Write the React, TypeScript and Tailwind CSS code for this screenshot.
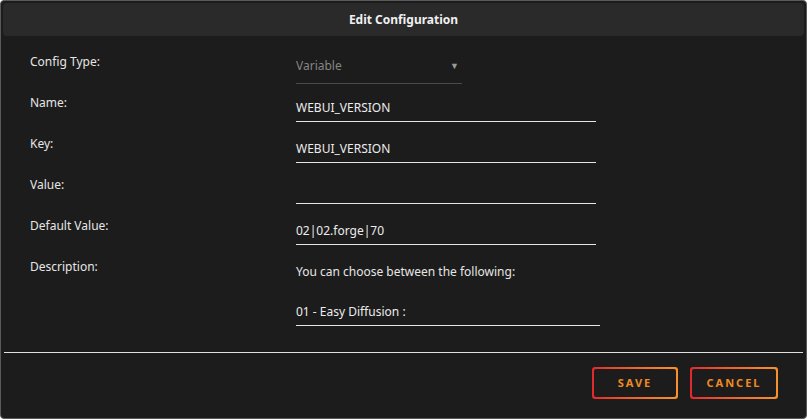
import React from "react";

const font = { fontFamily: "'Noto Sans', 'Open Sans', sans-serif" };

function Row({ label, children, h = "h-[41px]" }: { label: string; children: React.ReactNode; h?: string }) {
  return (
    <div className={`flex ${h}`}>
      <div className="w-[295px] pl-[29px] text-[12px] text-[#e6e6e6] leading-[14px]">{label}</div>
      <div className="flex-1">{children}</div>
    </div>
  );
}

function Input({ value, w = "w-[300px]" }: { value: string; w?: string }) {
  return (
    <div className={`${w} h-[21px] border-b border-[#e6e6e6] text-[12px] text-[#ececec] leading-[14px] pt-[0px]`}>{value}</div>
  );
}

function Btn({ label, w }: { label: string; w: string }) {
  return (
    <div className={`${w} h-[32px] rounded-[3px] p-[2px] bg-gradient-to-r from-[#e0282c] to-[#f8922c]`}>
      <div className="w-full h-full rounded-[2px] bg-[#1c1c1c] flex items-center justify-center text-[11px] font-bold tracking-[2px] text-[#f28a22]">
        {label}
      </div>
    </div>
  );
}

export default function App() {
  return (
    <div style={font} className="w-[807px] h-[419px] bg-[#1c1c1c] border border-[#5a5a5a] rounded-[4px] overflow-hidden flex flex-col">
      <div className="mx-[2px] mt-[2px] h-[33px] bg-[#2a2a2a] rounded-[4px] flex items-center justify-center text-[12px] font-bold text-[#f0f0f0]">
        Edit Configuration
      </div>
      <div className="pt-[19px] flex flex-col">
        <Row label="Config Type:">
          <div className="w-[166px] h-[25px] mt-[4px] border-b border-[#4a4a4a] flex justify-between text-[12px] text-[#858585] leading-[14px] pr-[3px]">
            <span>Variable</span>
            <span className="text-[9px] text-[#9a9a9a] leading-[14px]">▼</span>
          </div>
        </Row>
        <Row label="Name:">
          <div className="mt-[5px]"><Input value="WEBUI_VERSION" /></div>
        </Row>
        <Row label="Key:">
          <div className="mt-[5px]"><Input value="WEBUI_VERSION" /></div>
        </Row>
        <Row label="Value:">
          <div className="mt-[5px]"><Input value="" /></div>
        </Row>
        <Row label="Default Value:">
          <div className="mt-[5px]"><Input value="02|02.forge|70" /></div>
        </Row>
        <Row label="Description:" h="h-[75px]">
          <div className="mt-[5px] text-[12px] text-[#e6e6e6] leading-[14px]">You can choose between the following:</div>
          <div className="mt-[26px]"><Input value="01 - Easy Diffusion :" w="w-[304px]" /></div>
        </Row>
      </div>
      <div className="mx-[3px] mt-[17px] h-[1px] bg-[#e0e0e0]" />
      <div className="flex justify-end gap-[12px] pr-[28px] pt-[14px]">
        <Btn label="SAVE" w="w-[86px]" />
        <Btn label="CANCEL" w="w-[88px]" />
      </div>
    </div>
  );
}
